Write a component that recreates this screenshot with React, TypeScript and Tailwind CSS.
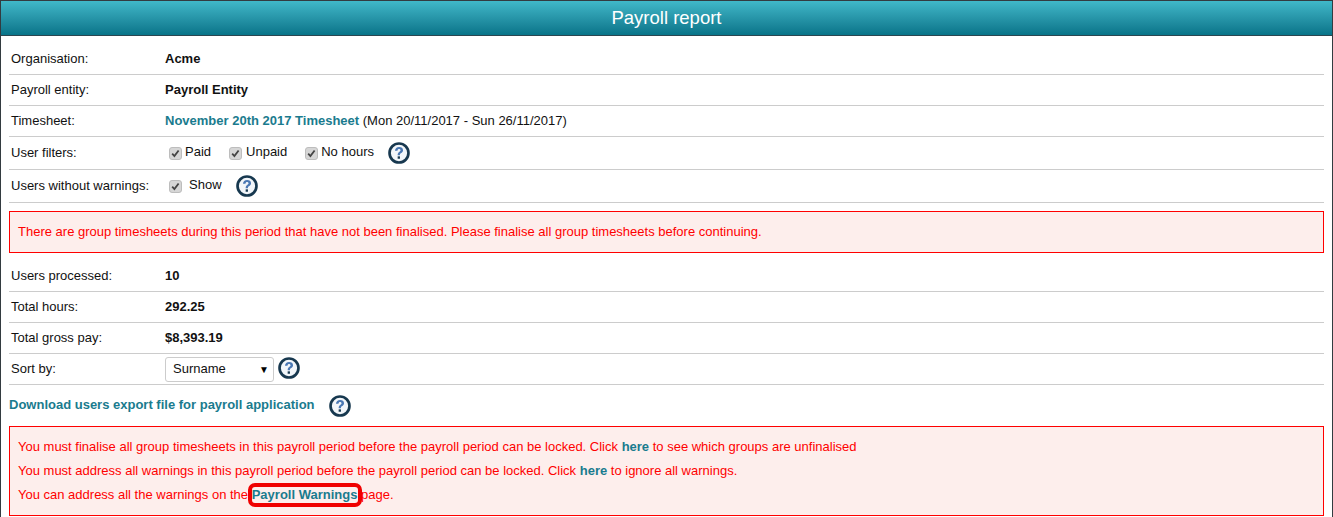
function HelpIcon({ className = '' }: { className?: string }) {
  return (
    <svg width="22" height="22" viewBox="0 0 23 23" className={`shrink-0 ${className}`}>
      <circle cx="11.5" cy="11.5" r="9.9" fill="#f2f6fa" stroke="#17384f" strokeWidth="2.800" />
      <path d="M7.300 9.200c.1-2.500 1.900-4 4.300-4 2.500 0 4.100 1.300 4.100 3.300 0 1.600-1 2.400-2 3.100-.9.6-1.200 1-1.200 2.200h-2.400c0-1.800.6-2.700 1.600-3.400.9-.6 1.400-1 1.400-1.700 0-.8-.6-1.400-1.500-1.400-1 0-1.600.6-1.700 1.900z" fill="#4a78b4" />
      <rect x="10.100" y="15" width="2.400" height="2.500" fill="#17384f" />
    </svg>
  )
}

function Check({ label, gap = 'gap-[3px]' }: { label: string; gap?: string }) {
  return (
    <span className={`flex items-center ${gap}`}>
      <span className="w-[13px] h-[13px] rounded-[3px] bg-[#d6d6d6] border border-[#bdbdbd] flex items-center justify-center">
        <svg width="9" height="9" viewBox="0 0 9 9">
          <path d="M1.200 4.700l2.200 2.400 4.200-5.600" fill="none" stroke="#444" strokeWidth="1.800" />
        </svg>
      </span>
      <span className="relative -top-px">{label}</span>
    </span>
  )
}

function Row({ label, h = 'h-[31px]', children }: { label: string; h?: string; children: React.ReactNode }) {
  return (
    <div className={`flex items-center ${h} border-b border-[#cccccc] pl-[2px]`}>
      <div className="w-[154px] shrink-0">{label}</div>
      {children}
    </div>
  )
}

const link = 'font-bold text-[#1a7b8e]'

export default function App() {
  return (
    <div className="h-[517px] w-[1333px] overflow-hidden border-x border-t border-[#333b40] bg-white text-[13px] text-[#111] font-['Liberation_Sans',Arial,sans-serif]">
      <div className="h-[35px] flex items-center justify-center border-b border-[#2b4650] bg-gradient-to-b from-[#40b8c9] to-[#077489] text-white text-[18.500px]">
        Payroll report
      </div>
      <div className="pl-2 pr-2 pt-[8px]">
        <Row label="Organisation:"><b>Acme</b></Row>
        <Row label="Payroll entity:"><b>Payroll Entity</b></Row>
        <Row label="Timesheet:">
          <span><span className={link}>November 20th 2017 Timesheet</span> (Mon 20/11/2017 - Sun 26/11/2017)</span>
        </Row>
        <Row label="User filters:" h="h-[33px]">
          <div className="flex items-center pl-[4px]">
            <Check label="Paid" />
            <span className="w-[18px]" />
            <Check label="Unpaid" gap="gap-[4px]" />
            <span className="w-[18px]" />
            <Check label="No hours" />
            <span className="w-[14px]" />
            <HelpIcon />
          </div>
        </Row>
        <Row label="Users without warnings:" h="h-[33px]">
          <div className="flex items-center pl-[4px]">
            <Check label="Show" gap="gap-[7px]" />
            <span className="w-[14px]" />
            <HelpIcon />
          </div>
        </Row>
        <div className="mt-2 h-[42px] flex items-center border border-[#ff0000] bg-[#fdeeec] px-2 text-[#ff0000]">
          There are group timesheets during this period that have not been finalised. Please finalise all group timesheets before continuing.
        </div>
        <div className="mt-2">
          <Row label="Users processed:"><b>10</b></Row>
          <Row label="Total hours:"><b>292.25</b></Row>
          <Row label="Total gross pay:"><b>$8,393.19</b></Row>
          <Row label="Sort by:">
            <div className="w-[109px] h-[25px] flex items-center justify-between rounded-[3px] border border-[#cccccc] bg-white pl-[7px] pr-[4px]">
              <span>Surname</span>
              <span className="text-[10px] text-black">▼</span>
            </div>
            <span className="w-[4px]" />
            <HelpIcon className="relative -top-px" />
          </Row>
        </div>
        <div className="h-[41px] flex items-center">
          <span className={`${link} relative -top-px`}>Download users export file for payroll application</span>
          <span className="w-[14px]" />
          <HelpIcon />
        </div>
        <div className="h-[90px] flex flex-col justify-center gap-[6px] border border-[#ff0000] bg-[#fdeeec] px-2 pb-px text-[#ff0000] leading-[18px]">
          <div>You must finalise all group timesheets in this payroll period before the payroll period can be locked. Click <span className={link}>here</span> to see which groups are unfinalised</div>
          <div>You must address all warnings in this payroll period before the payroll period can be locked. Click <span className={link}>here</span> to ignore all warnings.</div>
          <div>
            You can address all the warnings on the{' '}
            <span className="relative">
              <span className={link}>Payroll Warnings</span>
              <span className="absolute -left-[4px] -right-[5px] -top-[4px] -bottom-[5px] rounded-[7px] border-4 border-[#f00000]" />
            </span>{' '}
            page.
          </div>
        </div>
      </div>
    </div>
  )
}
